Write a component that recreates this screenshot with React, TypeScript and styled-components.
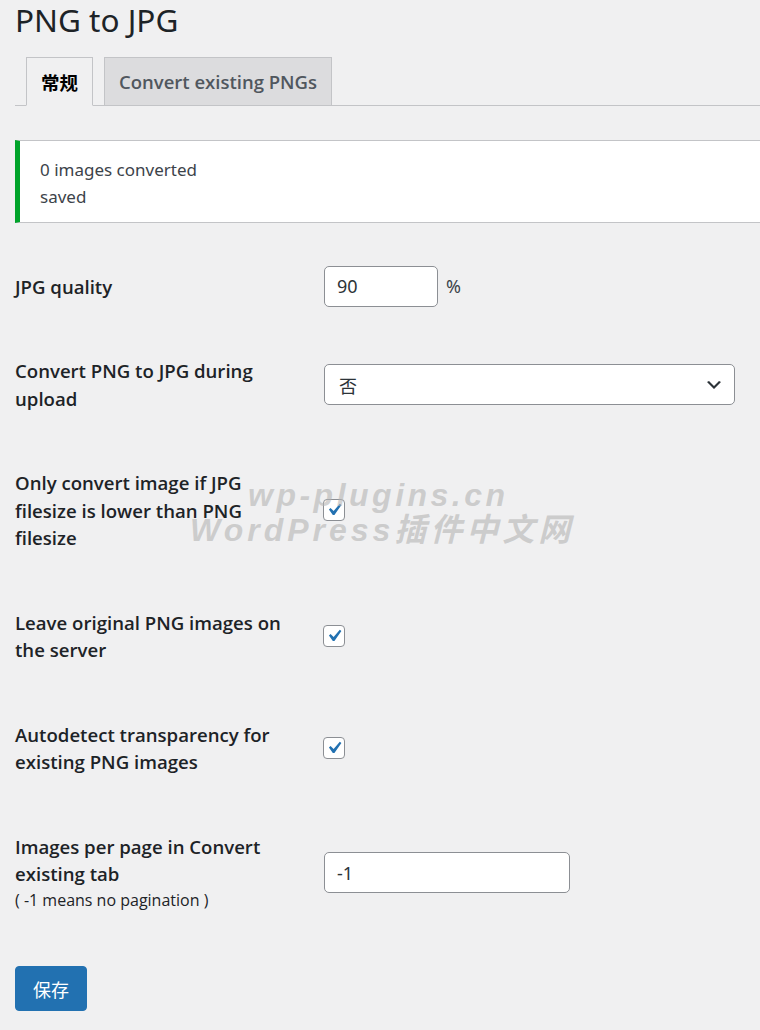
import styled, { createGlobalStyle } from 'styled-components';

const GlobalStyle = createGlobalStyle`
  html, body {
    margin: 0;
    background: #f0f0f1;
    overflow-x: hidden;
  }
  body {
    font-family: "Noto Sans", "Noto Sans CJK SC", sans-serif;
    color: #1d2327;
  }
`;

const Page = styled.div`
  position: relative;
  width: 800px;
  padding: 0 0 40px 15px;
`;

const Title = styled.h1`
  margin: 0;
  padding-top: 0;
  font-size: 31.5px;
  font-weight: 400;
  line-height: 40px;
  color: #1d2327;
`;

const NavTabs = styled.div`
  display: flex;
  align-items: flex-end;
  gap: 11px;
  margin-top: 17px;
  padding-left: 11px;
  border-bottom: 1px solid #c3c4c7;
`;

const Tab = styled.button<{ $active: boolean }>`
  height: 49px;
  margin-bottom: -1px;
  padding: 0 14px;
  border: 1px solid #c3c4c7;
  border-bottom-color: ${(p) => (p.$active ? '#f0f0f1' : '#c3c4c7')};
  background: ${(p) => (p.$active ? '#f0f0f1' : '#dcdcde')};
  color: ${(p) => (p.$active ? '#000' : '#50575e')};
  font-family: "Open Sans", "Noto Sans CJK SC", sans-serif;
  font-size: 18.5px;
  font-weight: 600;
  cursor: pointer;
`;

const Notice = styled.div`
  margin-top: 34px;
  padding: 15px 20px 12px 20px;
  background: #fff;
  border: 1px solid #c3c4c7;
  border-left: 5px solid #00a32a;
  font-size: 17px;
  line-height: 27px;
  color: #3c434a;
`;

const FormTable = styled.div`
  margin-top: 21px;
`;

const Row = styled.div`
  display: grid;
  grid-template-columns: 309px 1fr;
  align-items: center;
`;

const Label = styled.div`
  padding: 28.5px 0;
  max-width: 276px;
  font-family: "Open Sans", "Noto Sans CJK SC", sans-serif;
  font-size: 18.6px;
  font-weight: 600;
  line-height: 27.5px;
  color: #1d2327;
`;

const Hint = styled.div`
  font-size: 16px;
  font-weight: 500;
  line-height: 25px;
`;

const Field = styled.div`
  display: flex;
  align-items: center;
  gap: 8px;
  font-size: 18px;
  color: #3c434a;
`;

const TextInput = styled.input<{ $width: number }>`
  box-sizing: border-box;
  width: ${(p) => p.$width}px;
  height: 41px;
  padding: 0 12px;
  border: 1px solid #8c8f94;
  border-radius: 5px;
  background: #fff;
  font-family: "Noto Sans", sans-serif;
  font-size: 18px;
  color: #2c3338;
  outline: none;
`;

const SelectBox = styled.div`
  box-sizing: border-box;
  display: flex;
  align-items: center;
  justify-content: space-between;
  width: 411px;
  height: 41px;
  padding: 0 10px 0 14px;
  border: 1px solid #8c8f94;
  border-radius: 5px;
  background: #fff;
  font-family: "Noto Sans CJK SC", sans-serif;
  font-size: 18px;
  color: #2c3338;
`;

const CheckBox = styled.span`
  box-sizing: border-box;
  display: inline-flex;
  align-items: center;
  justify-content: center;
  width: 22px;
  height: 22px;
  margin-left: -1px;
  border: 1px solid #8c8f94;
  border-radius: 4px;
  background: #fff;
`;

const SaveButton = styled.button`
  margin-top: 25px;
  height: 45px;
  padding: 0 17px;
  border: 1px solid #2271b1;
  border-radius: 4px;
  background: #2271b1;
  color: #fff;
  font-family: "Noto Sans CJK SC", sans-serif;
  font-size: 18px;
  cursor: pointer;
`;

const Watermark = styled.div`
  position: absolute;
  left: 190px;
  top: 478px;
  pointer-events: none;
  font-family: "Liberation Sans", "Noto Sans CJK SC", sans-serif;
  font-weight: 700;
  font-style: italic;
  color: rgba(180, 180, 180, 0.6);
  line-height: 35px;
`;

const WatermarkLine = styled.div<{ $indent: number; $spacing: number }>`
  padding-left: ${(p) => p.$indent}px;
  font-size: 32px;
  letter-spacing: ${(p) => p.$spacing}px;
`;

function Check() {
  return (
    <CheckBox>
      <svg width="26" height="26" viewBox="0 0 20 20" style={{ margin: '-2px' }}>
        <path d="M14.83 4.89l1.34.94-5.81 8.38H9.02L5.78 9.67l1.34-1.25 2.57 2.4z" fill="#2271b1" />
      </svg>
    </CheckBox>
  );
}

function Chevron() {
  return (
    <svg width="20" height="20" viewBox="0 0 20 20">
      <path d="M5 6l5 5 5-5 2 1-7 7-7-7 2-1z" fill="#2c3338" />
    </svg>
  );
}

export default function App() {
  return (
    <Page>
      <GlobalStyle />
      <Title>PNG to JPG</Title>
      <NavTabs>
        <Tab $active>常规</Tab>
        <Tab $active={false}>Convert existing PNGs</Tab>
      </NavTabs>

      <Notice>
        0 images converted
        <br />
        saved
      </Notice>

      <FormTable>
        <Row>
          <Label>JPG quality</Label>
          <Field>
            <TextInput $width={114} defaultValue="90" />
            <span>%</span>
          </Field>
        </Row>
        <Row>
          <Label>Convert PNG to JPG during upload</Label>
          <Field>
            <SelectBox>
              <span>否</span>
              <Chevron />
            </SelectBox>
          </Field>
        </Row>
        <Row>
          <Label>Only convert image if JPG filesize is lower than PNG filesize</Label>
          <Field>
            <Check />
          </Field>
        </Row>
        <Row>
          <Label>Leave original PNG images on the server</Label>
          <Field>
            <Check />
          </Field>
        </Row>
        <Row>
          <Label>Autodetect transparency for existing PNG images</Label>
          <Field>
            <Check />
          </Field>
        </Row>
        <Row>
          <Label>
            Images per page in Convert existing tab
            <Hint>( -1 means no pagination )</Hint>
          </Label>
          <Field>
            <TextInput $width={246} defaultValue="-1" />
          </Field>
        </Row>
      </FormTable>

      <SaveButton>保存</SaveButton>

      <Watermark>
        <WatermarkLine $indent={58} $spacing={3.5}>wp-plugins.cn</WatermarkLine>
        <WatermarkLine $indent={0} $spacing={4}>WordPress插件中文网</WatermarkLine>
      </Watermark>
    </Page>
  );
}
